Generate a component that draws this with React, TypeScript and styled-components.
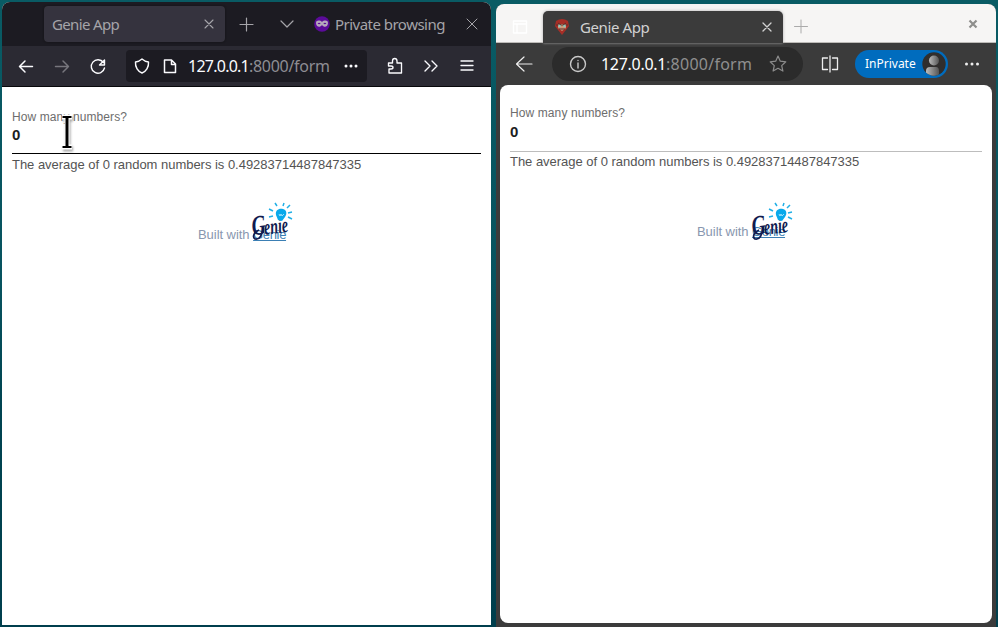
import React from "react";
import styled, { createGlobalStyle } from "styled-components";

const GlobalStyle = createGlobalStyle`
  * { box-sizing: border-box; }
  body { margin: 0; overflow: hidden; }
`;

const Desktop = styled.main`
  width: 998px;
  height: 627px;
  display: flex;
  align-items: flex-start;
  gap: 5px;
  padding-left: 2px;
  background: linear-gradient(#095b64, #07535f 45%, #004451 65%, #003f4d);
  font-family: "Noto Sans", sans-serif;
`;

const FirefoxWindow = styled.section`
  width: 489px;
  height: 623px;
  margin-top: 2px;
  display: flex;
  flex-direction: column;
  border-radius: 8px 8px 0 0;
  overflow: hidden;
  background: #fff;
`;

const FirefoxTabs = styled.header`
  height: 44px;
  display: flex;
  align-items: center;
  background: #1c1b22;
  color: #a5a4a9;
`;

const FirefoxTab = styled.div`
  width: 181px;
  height: 36px;
  margin-left: 42px;
  padding: 0 6px 0 8px;
  display: flex;
  align-items: center;
  justify-content: space-between;
  border-radius: 4px;
  background: #35333e;
  box-shadow: 0 0 2px #111;
`;

const Label = styled.span<{ $width: number; $size?: number; $spacing?: number }>`
  flex: none;
  width: ${(p) => p.$width}px;
  font-size: ${(p) => p.$size ?? 15}px;
  letter-spacing: ${(p) => p.$spacing ?? 0}px;
  line-height: 22px;
  white-space: nowrap;
`;

const FirefoxToolbar = styled.nav`
  height: 41px;
  display: flex;
  align-items: center;
  background: #2b2a33;
  border-bottom: 1px solid #08080b;
  color: #fbfbfe;
`;

const FirefoxAddress = styled.div`
  width: 241px;
  height: 32px;
  margin-left: 18px;
  padding: 0 6px;
  display: flex;
  align-items: center;
  border-radius: 4px;
  background: #1c1b22;
`;

const Address = styled.span<{ $color: string; $host: string; $spacing: number; $hostSpacing: number }>`
  flex: none;
  font-size: 16px;
  line-height: 22px;
  letter-spacing: ${(p) => p.$spacing}px;
  white-space: nowrap;
  color: ${(p) => p.$color};
  b {
    font-weight: 400;
    letter-spacing: ${(p) => p.$hostSpacing}px;
    color: ${(p) => p.$host};
  }
`;

const Glyph = styled.svg<{ $left?: number; $tone?: string }>`
  display: block;
  flex: none;
  margin-left: ${(p) => p.$left ?? 0}px;
  color: ${(p) => p.$tone ?? "inherit"};
  overflow: visible;
`;

const Fill = styled.div`
  flex: 1;
`;

const Gap = styled.div<{ $width: number }>`
  flex: none;
  width: ${(p) => p.$width}px;
`;

const EdgeWindow = styled.section`
  width: 500px;
  height: 623px;
  margin-top: 4px;
  display: flex;
  flex-direction: column;
  border-radius: 8px 8px 0 0;
  overflow: hidden;
  background: #3b3b3b;
`;

const EdgeTabs = styled.header`
  height: 39px;
  display: flex;
  align-items: flex-end;
  background: #f6f5f4;
  box-shadow: inset 0 -1px #bdbbb8;
`;

const EdgeSlot = styled.div<{ $width: number }>`
  width: ${(p) => p.$width}px;
  height: 32px;
  display: flex;
  align-items: center;
  justify-content: center;
`;

const EdgeTab = styled.div`
  width: 240px;
  height: 32px;
  padding: 0 6px 1px 9px;
  display: flex;
  align-items: center;
  border-radius: 5px 5px 0 0;
  background: #3b3b3b;
  box-shadow: 0 0 3px #aaa;
  color: #d2d2d2;
`;

const EdgeToolbar = styled.nav`
  height: 42px;
  display: flex;
  align-items: center;
  color: #eee;
`;

const EdgeAddress = styled.div`
  width: 251px;
  height: 34px;
  margin-left: 18px;
  padding: 0 15px 0 16px;
  display: flex;
  align-items: center;
  border-radius: 17px;
  background: #2b2b2b;
`;

const PrivateBadge = styled.div`
  width: 93px;
  height: 28px;
  margin-left: 15px;
  padding: 0 2px 0 10px;
  display: flex;
  align-items: center;
  justify-content: space-between;
  border-radius: 14px;
  background: #006cbe;
  color: #fff;
`;

const FormPage = styled.article<{ $edge?: boolean }>`
  position: relative;
  height: 538px;
  margin: ${(p) => (p.$edge ? "0 4px" : "0")};
  padding: ${(p) => (p.$edge ? "20px 10px 0" : "22px 10px 0")};
  border-radius: ${(p) => (p.$edge ? "8px" : "0")};
  background: #fff;
  font-family: "Liberation Sans", Arial, sans-serif;
`;

const Question = styled.label`
  display: block;
  font-size: 12px;
  line-height: 16px;
  letter-spacing: 0.1px;
  color: #6d6d6d;
`;

const NumberField = styled.div<{ $edge?: boolean }>`
  height: ${(p) => (p.$edge ? 31 : 29)}px;
  padding-top: ${(p) => (p.$edge ? 2 : 1)}px;
  border-bottom: 1px solid ${(p) => (p.$edge ? "#bdbdbd" : "#000")};
  font-size: 15px;
  font-weight: 700;
  line-height: 18px;
  color: #1d1d1d;
`;

const Result = styled.p<{ $edge?: boolean }>`
  margin: ${(p) => (p.$edge ? 2 : 3)}px 0 0;
  font-size: 13px;
  line-height: 16px;
  letter-spacing: -0.025px;
  color: #545454;
`;

const Credit = styled.footer<{ $edge?: boolean }>`
  position: relative;
  width: max-content;
  margin: ${(p) => (p.$edge ? "54px 0 0 187px" : "54px 0 0 186px")};
  font-size: 13px;
  line-height: 16px;
  letter-spacing: -0.05px;
  color: #8997af;
  a { letter-spacing: -0.35px; color: #3b7fb4; text-decoration: underline; }
`;

const LogoOverlay = styled.svg<{ $edge?: boolean }>`
  position: absolute;
  left: ${(p) => (p.$edge ? 54 : 53)}px;
  top: ${(p) => (p.$edge ? -21 : -24)}px;
  overflow: visible;
`;

const Pointer = styled.svg`
  position: absolute;
  left: 56px;
  top: 25px;
  filter: drop-shadow(1px 2px 1px #0005);
`;

type IconProps = { left?: number; tone?: string; d: string; size?: number; weight?: number };

function Icon({ left, tone, d, size = 20, weight = 1.35 }: IconProps) {
  return (
    <Glyph $left={left} $tone={tone} width={size} height={size} viewBox={`0 0 ${size} ${size}`} fill="none" stroke="currentColor" strokeWidth={weight} strokeLinecap="round" strokeLinejoin="round">
      <path d={d} />
    </Glyph>
  );
}

function Dots({ left, gap = 5 }: { left?: number; gap?: number }) {
  return (
    <Glyph $left={left} width="20" height="20" fill="currentColor">
      <circle cx={10 - gap} cy="10" r="1.5" />
      <circle cx="10" cy="10" r="1.5" />
      <circle cx={10 + gap} cy="10" r="1.5" />
    </Glyph>
  );
}

const CROSS = "M6 6l8 8M14 6l-8 8";

function GenieLogo({ edge }: { edge?: boolean }) {
  return (
    <LogoOverlay $edge={edge} width="44" height="40" viewBox="0 0 44 40">
      <g transform="rotate(-7 3 34)" fontFamily="Liberation Serif, serif" fontStyle="italic" fontWeight="700" fill="#111b4f">
        <text x="2" y="32" fontSize="28" textLength="14" lengthAdjust="spacingAndGlyphs">G</text>
        <text x="14" y="33" fontSize="22" textLength="24" lengthAdjust="spacingAndGlyphs">enie</text>
      </g>
      <path d="M12 25C11 32 9 37 4 36C1 34 3 29 8 27" fill="none" stroke="#111b4f" strokeWidth="1.7" />
      <path d="M25 12C24 7 28 5 32 6C36 7 36 11 34 14L31 18L27 17Z" fill="#08a9eb" />
      <path d="M28 11l1 2 1-2 1 2 2-2" fill="none" stroke="#bcecff" strokeWidth=".8" />
      <path d="M26 3l-2-3M32 3l1-3M36 5l3-3M37 10l4-1M37 14l4 2M22 8l-4-2M22 13l-4 1" stroke="#20afe6" strokeWidth="1.5" />
    </LogoOverlay>
  );
}

function AverageForm({ edge }: { edge?: boolean }) {
  return (
    <FormPage $edge={edge}>
      <Question>How many numbers?</Question>
      <NumberField $edge={edge}>0</NumberField>
      <Result $edge={edge}>The average of 0 random numbers is 0.49283714487847335</Result>
      <Credit $edge={edge}>
        Built with <a>Genie</a>
        <GenieLogo edge={edge} />
      </Credit>
      {!edge && (
        <Pointer width="20" height="40" viewBox="0 0 20 40" fill="none">
          <path d="M4 5h10M9 5v30M4 35h10" stroke="#fff" strokeWidth="5" />
          <path d="M4.5 5h9M4.5 35h9" stroke="#000" strokeWidth="2" />
          <path d="M9 5v30" stroke="#000" strokeWidth="3" />
        </Pointer>
      )}
    </FormPage>
  );
}

function Firefox() {
  return (
    <FirefoxWindow>
      <FirefoxTabs>
        <FirefoxTab>
          <Label $width={70} $spacing={-0.65}>Genie App</Label>
          <Icon d={CROSS} weight={1.1} />
        </FirefoxTab>
        <Icon left={11} d="M4 10.5h13M10.5 4v13" weight={1.2} />
        <Icon left={21} d="M4 7l6 6 6-6" weight={1.2} />
        <Glyph $left={17} width="16" height="16">
          <circle cx="8" cy="8" r="7.8" fill="#5b0b99" />
          <path fillRule="evenodd" fill="#b4a8bc" d="M2 7C2 4 6 4 8 6C10 4 14 4 14 7C14 11 10 12 8 9C6 12 2 11 2 7ZM3.6 7.5Q5 9 6.7 7.5Q5 6 3.6 7.5ZM9.3 7.5Q11 9 12.4 7.5Q11 6 9.3 7.5Z" />
        </Glyph>
        <Fill />
        <Label $width={115} $spacing={-0.52}>Private browsing</Label>
        <Icon left={12} d="M5 5l10 10M15 5L5 15" weight={1} />
        <Gap $width={9} />
      </FirefoxTabs>
      <FirefoxToolbar>
        <Icon left={14} d="M16.5 10.5h-13M9 5l-5.5 5.5L9 16" weight={1.45} />
        <Icon left={16} tone="#77767d" d="M3.5 10.5h13M11 5l5.5 5.5L11 16" weight={1.45} />
        <Icon left={16} d="M15.4 6.5A6.7 6.7 0 1 0 16.5 12M16.5 4v5h-5z" weight={1.4} />
        <FirefoxAddress>
          <Icon d="M10 3Q13 5.7 16.5 6C17 11 14 15.5 10 17C6 15.5 3 11 3.5 6Q7 5.7 10 3Z" weight={1.45} />
          <Icon left={8} d="M5 4h6.5l4 4v8.5H4.5V4ZM11.5 4v4.5H15.5" weight={1.5} />
          <Gap $width={8} />
          <Address $color="#8e8d93" $host="#fbfbfe" $spacing={-0.3} $hostSpacing={-0.75}><b>127.0.0.1</b>:8000/form</Address>
          <Fill />
          <Dots />
        </FirefoxAddress>
        <Icon left={18} d="M3.5 7h4V5q0-2.5 2.2-2.5T12 5v2h4.5v10H4v-4h2q2 0 2-1.5T6 10H3.5Z" />
        <Icon left={16} d="M4 5l5 5-5 5M11 5l5 5-5 5" />
        <Icon left={16} d="M4 5h12M4 9.5h12M4 14h12" />
      </FirefoxToolbar>
      <AverageForm />
    </FirefoxWindow>
  );
}

function Edge() {
  return (
    <EdgeWindow>
      <EdgeTabs>
        <EdgeSlot $width={47}>
          <Icon tone="#fff" d="M3.5 4h13v12h-13zM3.5 7h13M7 7v9" weight={1.4} />
        </EdgeSlot>
        <EdgeTab>
          <Glyph $left={1} width="18" height="18">
            <path d="M3 3Q9-1 15 3L16 8 13 12 9 17 5 12 2 8Z" fill="#a62e27" />
            <path d="M5 6h8v4l-4 3-4-3Z" fill="#cc9878" />
            <path d="M3 7h12M5 5l3 2M13 5l-3 2M6 11h6" stroke="#5a302c" />
            <circle cx="6.5" cy="8" r="1.3" fill="#8ec7bd" />
            <circle cx="11.5" cy="8" r="1.3" fill="#8ec7bd" />
          </Glyph>
          <Gap $width={9} />
          <Label $width={80} $spacing={-0.4}>Genie App</Label>
          <Fill />
          <Icon d={CROSS} weight={1.3} />
        </EdgeTab>
        <EdgeSlot $width={35}>
          <Icon tone="#aaa" d="M3.5 9.5h13M10 3v13" weight={1} />
        </EdgeSlot>
        <Fill />
        <EdgeSlot $width={46}>
          <Glyph $tone="#8e8e8c" width="20" height="26" viewBox="0 3 20 26">
            <path d="M6.5 9.5l7 7M13.5 9.5l-7 7" stroke="currentColor" strokeWidth="2.2" />
          </Glyph>
        </EdgeSlot>
      </EdgeTabs>
      <EdgeToolbar>
        <Icon left={18} d="M18 10H2.5M10 3l-7.5 7L10 17" weight={1.2} />
        <EdgeAddress>
          <Icon d="M17.5 10a7.5 7.5 0 1 1-15 0a7.5 7.5 0 0 1 15 0M10 9v5M10 6.5v.1" tone="#c9c9c9" weight={1.4} />
          <Gap $width={13} />
          <Address $color="#8f8f8f" $host="#fff" $spacing={0.25} $hostSpacing={-0.3}><b>127.0.0.1</b>:8000/form</Address>
          <Fill />
          <Icon tone="#8c8c8c" d="M10 2l2.3 5.2 5.5.6-4.1 3.8 1.2 5.5L10 14.3 5.1 17l1.2-5.4-4.1-3.8 5.5-.6Z" weight={1.2} />
        </EdgeAddress>
        <Icon left={17} d="M7.5 4h-5v11.5h5M12.5 4h5v11.5h-5M10 2v16" weight={1.3} />
        <PrivateBadge>
          <Label $width={52} $size={12}>InPrivate</Label>
          <Glyph width="24" height="24">
            <defs>
              <linearGradient id="person"><stop stopColor="#bbb" /><stop offset="1" stopColor="#555" /></linearGradient>
              <clipPath id="avatar"><circle cx="12" cy="12" r="11.7" /></clipPath>
            </defs>
            <g clipPath="url(#avatar)">
              <path d="M0 0h24v24H0Z" fill="#302e2d" />
              <circle cx="12" cy="8.5" r="5" fill="url(#person)" />
              <path d="M4 24v-5q0-4 4-4h6q3 0 3 4v5Z" fill="url(#person)" />
            </g>
          </Glyph>
        </PrivateBadge>
        <Dots left={14} gap={5.5} />
      </EdgeToolbar>
      <AverageForm edge />
    </EdgeWindow>
  );
}

export default function App() {
  return (
    <>
      <GlobalStyle />
      <Desktop>
        <Firefox />
        <Edge />
      </Desktop>
    </>
  );
}
